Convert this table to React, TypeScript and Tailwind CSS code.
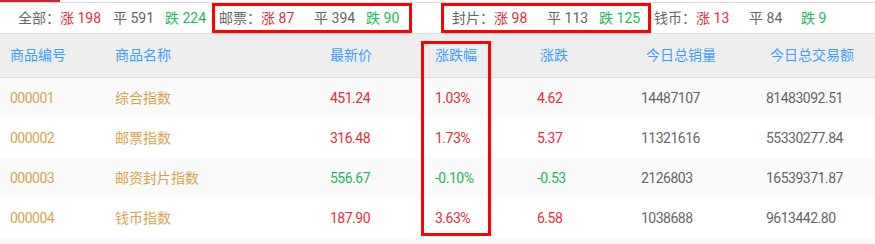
import React from "react";

const RED = "text-[#e0303c]";
const GREEN = "text-[#1db85a]";

type Group = { label: string; up: number; flat: number; down: number };

const groups: Group[] = [
  { label: "全部", up: 198, flat: 591, down: 224 },
  { label: "邮票", up: 87, flat: 394, down: 90 },
  { label: "封片", up: 98, flat: 113, down: 125 },
  { label: "钱币", up: 13, flat: 84, down: 9 },
];

const rows = [
  { code: "000001", name: "综合指数", price: "451.24", pct: "1.03%", chg: "4.62", vol: "14487107", amt: "81483092.51", up: true },
  { code: "000002", name: "邮票指数", price: "316.48", pct: "1.73%", chg: "5.37", vol: "11321616", amt: "55330277.84", up: true },
  { code: "000003", name: "邮资封片指数", price: "556.67", pct: "-0.10%", chg: "-0.53", vol: "2126803", amt: "16539371.87", up: false },
  { code: "000004", name: "钱币指数", price: "187.90", pct: "3.63%", chg: "6.58", vol: "1038688", amt: "9613442.80", up: true },
];

function Stat({ g }: { g: Group }) {
  return (
    <div className="flex items-center">
      <span className="w-[42px] text-[#666]">{g.label}：</span>
      <span className={`w-[53px] ${RED}`}>涨 {g.up}</span>
      <span className="w-[52px] text-[#666]">平 {g.flat}</span>
      <span className={GREEN}>跌 {g.down}</span>
    </div>
  );
}

const cols = "grid grid-cols-[105px_215px_105px_102px_104px_125px_1fr] pl-[10px]";

export default function App() {
  return (
    <div
      className="relative w-[875px] h-[244px] overflow-hidden bg-[#f7f7f7] text-[14px]"
      style={{ fontFamily: "Roboto, 'Noto Sans CJK SC', sans-serif" }}
    >
      {/* top tab line */}
      <div className="h-[3px] border-b border-[#dddddd] bg-white">
        <div className="h-[2px] w-[60px] bg-[#d0242f]" />
      </div>

      {/* stats bar */}
      <div className="flex h-[31px] items-start border-b border-[#dddddd] bg-white pl-[18px]">
        <div className="flex h-[30px] items-center">
          <Stat g={groups[0]} />
        </div>
        <div className="ml-[6px] flex h-[30px] w-[200px] items-center border-[3px] border-[#ff0000] pl-[4px]">
          <Stat g={groups[1]} />
        </div>
        <div className="ml-[29px] flex h-[30px] w-[210px] items-center border-[3px] border-[#ff0000] pl-[8px]">
          <Stat g={groups[2]} />
        </div>
        <div className="ml-[3px] flex h-[30px] items-center">
          <Stat g={groups[3]} />
        </div>
      </div>

      {/* table header */}
      <div className={`${cols} h-[44px] items-center border-b border-[#dddddd] bg-[#eeeeee] text-[#409eff]`}>
        <span>商品编号</span>
        <span>商品名称</span>
        <span>最新价</span>
        <span>涨跌幅</span>
        <span className="pl-[3px]">涨跌</span>
        <span className="pl-[5px]">今日总销量</span>
        <span className="pl-[4px]">今日总交易额</span>
      </div>

      {/* table body */}
      {rows.map((r, i) => (
        <div
          key={r.code}
          className={`${cols} h-[40px] items-center tracking-[-0.5px] ${i % 2 === 0 ? "bg-[#fafafa]" : "bg-white"}`}
        >
          <span className="text-[#dba24c]">{r.code}</span>
          <span className="tracking-normal text-[#dba24c]">{r.name}</span>
          <span className={r.up ? RED : GREEN}>{r.price}</span>
          <span className={r.up ? RED : GREEN}>{r.pct}</span>
          <span className={r.up ? RED : GREEN}>{r.chg}</span>
          <span className="text-[#666]">{r.vol}</span>
          <span className="text-[#666]">{r.amt}</span>
        </div>
      ))}
      <div className="h-[6px] bg-[#fafafa]" />

      {/* highlight around the 涨跌幅 column */}
      <div className="pointer-events-none absolute left-[421px] top-[41px] h-[195px] w-[70px] border-[3px] border-[#ff0000]" />
    </div>
  );
}
